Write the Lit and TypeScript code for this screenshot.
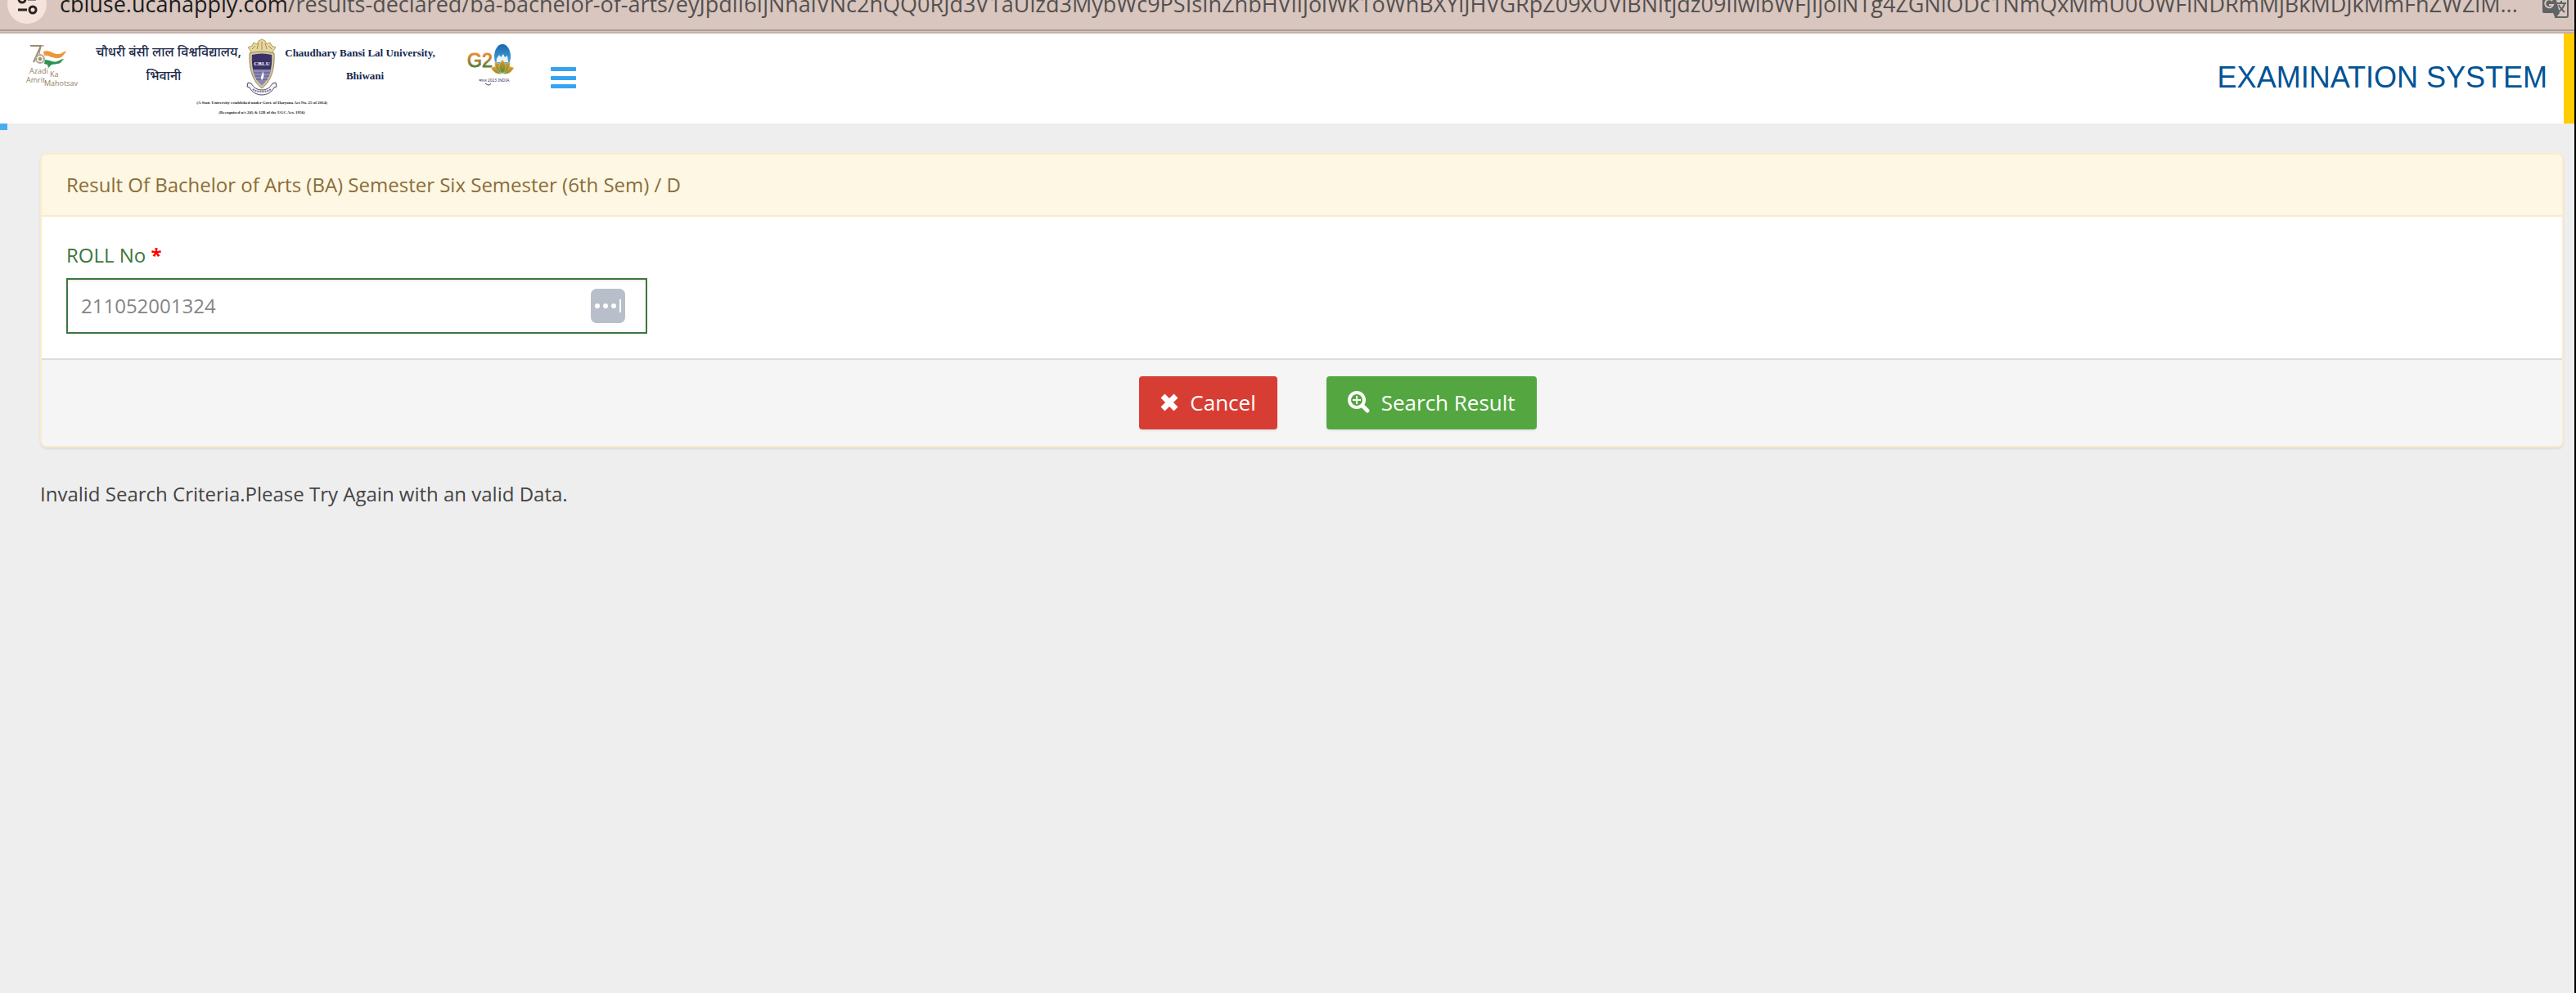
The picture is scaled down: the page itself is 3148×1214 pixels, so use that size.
import { LitElement, html, css, svg } from "lit";
import { customElement, property } from "lit/decorators.js";

const HOST = "cbluse.ucanapply.com";
const PATH =
  "/results-declared/ba-bachelor-of-arts/eyJpdiI6IjNnalVNc2hQQ0RJd3V1aUlzd3MybWc9PSIsInZhbHVlIjoiWk1oWnBXYlJHVGRpZ09xUVlBNitjdz09IiwibWFjIjoiNTg4ZGNiODc1NmQxMmU0OWFiNDRmMjBkMDJkMmFhZWZiM...";

@customElement("address-bar")
export class AddressBar extends LitElement {
  static styles = css`
    :host {
      display: block;
      height: 36px;
      overflow: hidden;
      background: #d8c6bf;
      border-bottom: 2px solid #a99b95;
    }
    .row {
      display: flex;
      align-items: center;
      height: 48px;
      margin-top: -19px;
      padding: 0 6px 0 9px;
    }
    .info {
      flex: none;
      width: 48px;
      height: 48px;
      padding: 0;
      border: 0;
      border-radius: 50%;
      background: #f6e3dc;
    }
    .icon {
      display: block;
    }
    .url {
      flex: 1;
      margin-left: 16px;
      font: 27px/36px "Open Sans", "Noto Sans", sans-serif;
      color: #54504f;
      white-space: nowrap;
    }
    .host {
      color: #1d1b1b;
    }
    .translate {
      flex: none;
      padding: 0;
      border: 0;
      background: none;
    }
  `;

  render() {
    return html`
      <div class="row">
        <button class="info" aria-label="View site information">
          <svg class="icon" width="48" height="48" viewBox="0 0 48 48" fill="none" stroke="#2a2625" stroke-width="3">
            <circle cx="18" cy="18" r="4" />
            <path d="M25 18h10M13 31h11" />
            <circle cx="31" cy="31" r="4" />
          </svg>
        </button>
        <div class="url"><span class="host">${HOST}</span>${PATH}</div>
        <button class="translate" aria-label="Translate this page">
          <svg class="icon" width="34" height="34" viewBox="0 0 34 34">
            <path d="M13 9h17a2 2 0 0 1 2 2v20a2 2 0 0 1-2 2H17z" fill="none" stroke="#5f6365" stroke-width="2" />
            <path d="M3 1h12l7 27H3a2 2 0 0 1-2-2V3a2 2 0 0 1 2-2z" fill="#5f6365" />
            <path d="M14 28h8l-5 6z" fill="#5f6365" />
            <path d="M13 13a5 5 0 1 0 1 5h-5" fill="none" stroke="#d8c6bf" stroke-width="2" />
            <path d="M18 16h12M24 13v3M28 16c-1 5-4 8-7 10M21 18c1 3 4 6 7 9" fill="none" stroke="#5f6365" stroke-width="2" />
          </svg>
        </button>
      </div>
    `;
  }
}

const petals = [-70, 70, -38, 38, 0];

@customElement("university-logo")
export class UniversityLogo extends LitElement {
  static styles = css`
    :host {
      display: block;
    }
    .art {
      display: block;
    }
    .azadi {
      font: 9px "Open Sans", sans-serif;
      fill: #8f8263;
    }
    .hindi {
      font: 500 16px "Noto Sans Devanagari", "Noto Sans", sans-serif;
      fill: #1c2a4a;
    }
    .name {
      font: bold 13px "Liberation Serif", serif;
      fill: #14284f;
    }
    .act {
      font: bold 5px "Liberation Serif", serif;
      fill: #222;
    }
    .crest {
      font: bold 7px "Liberation Serif", serif;
      fill: #fff;
    }
    .g20 {
      font: 23px "Liberation Sans Narrow", "Liberation Sans", sans-serif;
      stroke-width: 1;
    }
    .bharat {
      font: 5px "Noto Sans Devanagari", "Noto Sans", sans-serif;
      fill: #34345e;
    }
  `;

  render() {
    return html`
      <svg class="art" width="630" height="110" viewBox="0 41 630 110" role="img" aria-label="Chaudhary Bansi Lal University, Bhiwani">
        <defs>
          <linearGradient id="tri" x1="0" y1="0" x2="0" y2="1">
            <stop offset="0.2" stop-color="#e88a2e" />
            <stop offset="0.9" stop-color="#3f7d3a" />
          </linearGradient>
          <linearGradient id="globe" x1="0" y1="0" x2="0" y2="1">
            <stop offset="0" stop-color="#1668b0" />
            <stop offset="1" stop-color="#5cb6e4" />
          </linearGradient>
          <linearGradient id="lotus" x1="0" y1="0" x2="0" y2="1">
            <stop offset="0" stop-color="#e9962c" />
            <stop offset="1" stop-color="#4b8a35" />
          </linearGradient>
        </defs>

        <g fill="none" stroke="#9a8c6c">
          <path d="M37 56H50L41 76" stroke-width="2" />
          <path d="M54 56H50L48 66" stroke-width="1" />
          <circle cx="49" cy="72" r="5" stroke-width="2" stroke="#b3aa98" />
          <circle cx="49" cy="72" r="1" stroke-width="2" />
          <path d="M49 67v10M44 72h10M46 69l7 7M53 69l-7 7" stroke-width="0.5" />
        </g>
        <path d="M53 63c8-3 12 4 19 3 4 0 6-4 9-3-3 3-4 7-9 8-8 1-13-4-18-3z" fill="#ee963c" />
        <path d="M55 73c6 0 10 4 15 2 3-1 5-3 8-3-3 3-4 6-8 6-3 1-7 0-8 2l-3 3-1-4-4-1z" fill="#2a934f" />
        <text class="azadi" x="36" y="90">Azadi</text>
        <text class="azadi" x="61" y="94">Ka</text>
        <text class="azadi" x="32" y="101">Amrit</text>
        <text class="azadi" x="54" y="105">Mahotsav</text>

        <text class="hindi" x="206" y="69" text-anchor="middle">चौधरी बंसी लाल विश्वविद्यालय,</text>
        <text class="hindi" x="200" y="98" text-anchor="middle">भिवानी</text>

        <g>
          <path
            d="M303 58l5-2 2-4 4 2 2-4 4-2 4 2 2 4 4-2 2 4 5 2-4 5 1 4h-28l1-4z"
            fill="#e5d7a2"
            stroke="#b39a52"
            stroke-width="1"
          />
          <path d="M308 60l4-4M314 60l2-7M320 61v-10M326 60l-2-7M332 60l-4-4" stroke="#a58b45" fill="none" />
          <path d="M305 65q15-4 30 0c1 18-3 34-15 43-12-9-16-25-15-43z" fill="#cfc4a0" stroke="#9c8a59" />
          <path d="M308 67q12-3 24 0c1 15-2 28-12 37-10-9-13-22-12-37z" fill="#3a3166" />
          <path d="M309 85h22c-1 8-5 14-11 19-6-5-10-11-11-19z" fill="#8d88b2" />
          <path d="M310 89h20M311 93h18M313 97h14" stroke="#5c5690" stroke-width="1" />
          <path d="M320 98c-3-4 1-6 1-11 2 4 2 8-1 11z" fill="#fff" />
          <path
            d="M303 101l-1 5 3 1c3 6 9 9 15 9s12-3 15-9l3-1-1-5-4 1c-3 5-7 8-13 8s-10-3-13-8z"
            fill="#f4f3f5"
            stroke="#4a4766"
            stroke-width="1"
          />
          <path d="M309 109c4 4 18 4 22 0" fill="none" stroke="#77748c" stroke-width="2" stroke-dasharray="2 1" />
          <text class="crest" x="320" y="80" text-anchor="middle">CBLU</text>
        </g>

        <text class="name" x="440" y="69" text-anchor="middle">Chaudhary Bansi Lal University,</text>
        <text class="name" x="446" y="97" text-anchor="middle">Bhiwani</text>
        <text class="act" x="320" y="127" text-anchor="middle">(A State University established under Govt. of Haryana Act No. 25 of 2014)</text>
        <text class="act" x="320" y="139" text-anchor="middle">(Recognized u/s 2(f) &amp; 12B of the UGC Act, 1956)</text>

        <text class="g20" x="571" y="82" fill="url(#tri)" stroke="url(#tri)">G2</text>
        <ellipse cx="614" cy="69" rx="10" ry="15" fill="url(#globe)" />
        <path d="M607 76c-1-6 2-6 3-9l2 3 3-4 2 4 3-2 1 8z" fill="#e8f4fa" />
        ${petals.map(
          (a) => svg`<path d="M614 90c-6-6-5-11 0-17 5 6 6 11 0 17z" fill="url(#lotus)" stroke="#efd79a" stroke-width="0.5" transform="rotate(${a} 614 88)" />`
        )}
        <text class="bharat" x="585" y="100">भारत 2023 INDIA</text>
        <path d="M593 102q5 4 7 0" fill="none" stroke="#34345e" stroke-width="1" />
      </svg>
    `;
  }
}

@customElement("roll-form")
export class RollForm extends LitElement {
  static styles = css`
    :host {
      display: block;
    }
    .panel {
      overflow: hidden;
      border: 2px solid #faebcc;
      border-radius: 8px;
      background: #fff;
      box-shadow: 0 2px 3px rgba(0, 0, 0, 0.08);
      font: 24px/34px "Open Sans", "Noto Sans", sans-serif;
    }
    .title {
      margin: 0;
      padding: 20px 30px;
      border-bottom: 2px solid #faebcc;
      background: #fdf7e3;
      font: inherit;
      color: #8a6d3b;
    }
    .body {
      padding: 30px;
    }
    .label {
      display: block;
      margin-bottom: 11px;
      color: #3c763d;
    }
    .star {
      font-weight: bold;
      color: #f00;
    }
    .field {
      display: flex;
      align-items: center;
      box-sizing: border-box;
      width: 710px;
      max-width: 100%;
      height: 68px;
      padding-right: 25px;
      border: 2px solid #3c763d;
      background: #fff;
      box-shadow: inset 0 2px 2px rgba(0, 0, 0, 0.08);
    }
    .input {
      flex: 1;
      min-width: 0;
      height: 60px;
      padding: 0 16px 2px;
      border: 0;
      outline: 0;
      background: none;
      font: inherit;
      color: #858585;
    }
    .fill {
      padding: 0;
      border: 0;
      background: none;
    }
    .icon {
      display: block;
      flex: none;
    }
    .footer {
      display: flex;
      justify-content: center;
      gap: 60px;
      padding: 20px 0 20px 88px;
      border-top: 2px solid #ddd;
      background: #f5f5f5;
    }
    .btn {
      display: flex;
      align-items: center;
      gap: 14px;
      height: 65px;
      padding: 0 26px 2px;
      border: 0;
      border-radius: 4px;
      box-shadow: 0 2px 2px rgba(0, 0, 0, 0.06);
      font: 26px/36px "Open Sans", "Noto Sans", sans-serif;
      color: #fff;
    }
    .cancel {
      background: #d73d33;
    }
    .search {
      background: #54a740;
    }
  `;

  @property() roll = "211052001324";

  render() {
    return html`
      <form class="panel" @submit=${(e: Event) => e.preventDefault()}>
        <h1 class="title">Result Of Bachelor of Arts (BA) Semester Six Semester (6th Sem) / D</h1>
        <div class="body">
          <label class="label" for="roll">ROLL No <span class="star">*</span></label>
          <div class="field">
            <input class="input" id="roll" type="text" .value=${this.roll} />
            <button class="fill" type="button" aria-label="Fill from password manager">
              <svg class="icon" width="42" height="42" viewBox="0 0 42 42">
                <rect width="42" height="42" rx="7" fill="#b8bfca" />
                <g fill="#fff">
                  <circle cx="8" cy="21" r="3" />
                  <circle cx="18" cy="21" r="3" />
                  <circle cx="28" cy="21" r="3" />
                  <rect x="35" y="13" width="2" height="16" />
                </g>
              </svg>
            </button>
          </div>
        </div>
        <div class="footer">
          <button class="btn cancel" type="button">
            <svg class="icon" width="22" height="22" viewBox="0 0 22 22">
              <path d="M3 3l16 16M19 3L3 19" stroke="#fff" stroke-width="7" />
            </svg>
            Cancel
          </button>
          <button class="btn search" type="submit">
            <svg class="icon" width="27" height="27" viewBox="0 0 27 27" fill="none" stroke="#fff" stroke-linecap="round">
              <circle cx="11" cy="11" r="9" stroke-width="4" />
              <path d="M18 18l6 6" stroke-width="5" />
              <path d="M11 6v10M6 11h10" stroke-width="2" stroke-linecap="butt" />
            </svg>
            Search Result
          </button>
        </div>
      </form>
    `;
  }
}

@customElement("app-root")
export class AppRoot extends LitElement {
  static styles = css`
    :host {
      display: block;
      box-sizing: border-box;
      min-height: 100vh;
      border-right: 2px solid #000;
      background: #eee;
    }
    .rim {
      height: 2px;
      border-top: 1px solid #d8c6bf;
      background: #c5b1ab;
    }
    .header {
      display: flex;
      align-items: center;
      border-right: 13px solid #fc0;
      background: #fff;
    }
    .menu {
      margin-left: 43px;
      padding: 0 0 2px;
      border: 0;
      background: none;
    }
    .bars {
      display: block;
    }
    .system {
      flex: 1;
      margin-right: 20px;
      padding-bottom: 2px;
      font: 36px/48px "Liberation Sans", Arial, sans-serif;
      text-align: right;
      color: #005395;
    }
    .progress {
      width: 9px;
      height: 8px;
      background: #4badf0;
    }
    .main {
      padding: 28px 13px 28px 49px;
    }
    .message {
      margin: 40px 0 0;
      font: 24px/34px "Open Sans", "Noto Sans", sans-serif;
      color: #444;
    }
  `;

  render() {
    return html`
      <address-bar></address-bar>
      <div class="rim"></div>
      <header class="header">
        <university-logo></university-logo>
        <button class="menu" aria-label="Toggle navigation">
          <svg class="bars" width="31" height="26" viewBox="0 0 31 26" fill="#36a3f0">
            <rect width="31" height="5" rx="1" />
            <rect y="11" width="31" height="5" rx="1" />
            <rect y="21" width="31" height="5" rx="1" />
          </svg>
        </button>
        <div class="system">EXAMINATION SYSTEM</div>
      </header>
      <div class="progress"></div>
      <main class="main">
        <roll-form></roll-form>
        <p class="message">Invalid Search Criteria.Please Try Again with an valid Data.</p>
      </main>
    `;
  }
}
